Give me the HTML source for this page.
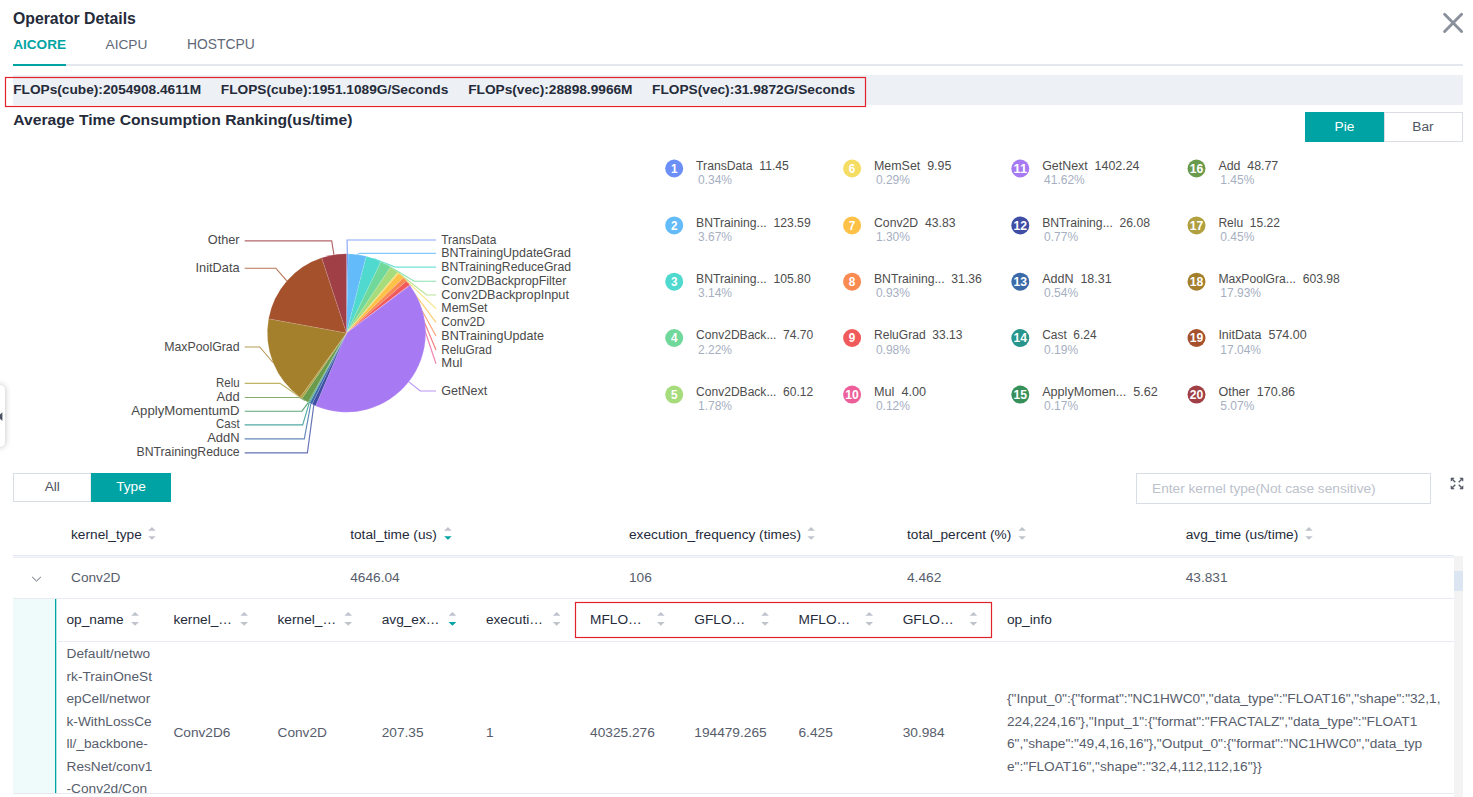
<!DOCTYPE html>
<html><head><meta charset="utf-8"><title>Operator Details</title>
<style>
html,body{margin:0;padding:0;background:#fff;overflow:hidden;}
body{width:1473px;height:797px;}
svg{display:block;font-family:"Liberation Sans",sans-serif;}
</style></head><body>
<svg width="1473" height="797" viewBox="0 0 1473 797">
<text x="13" y="23.9" font-size="15.8" fill="#252b3a" font-weight="bold">Operator Details</text>
<text x="13.2" y="48.9" font-size="13.6" fill="#00a3a3" font-weight="bold">AICORE</text>
<text x="105.5" y="48.9" font-size="13.7" fill="#5f6878">AICPU</text>
<text x="187" y="48.9" font-size="13.85" fill="#5f6878">HOSTCPU</text>
<rect x="13" y="64" width="1450" height="2" fill="#e4e7ee"/>
<rect x="13" y="64" width="53" height="2" fill="#00a3a3"/>
<path d="M1444.6,14.2 L1461.6,31.4 M1461.6,14.2 L1444.6,31.4" stroke="#8b919c" stroke-width="2.9" stroke-linecap="round"/>
<rect x="13" y="75" width="1450" height="30" fill="#edf0f4"/>
<rect x="5.5" y="77.5" width="860" height="29" fill="none" stroke="#e0222c" stroke-width="1.2"/>
<text x="13.2" y="93.6" font-size="13.7" fill="#252b3a" font-weight="bold">FLOPs(cube):2054908.4611M</text>
<text x="220.8" y="93.6" font-size="13.7" fill="#252b3a" font-weight="bold">FLOPS(cube):1951.1089G/Seconds</text>
<text x="468.2" y="93.6" font-size="13.7" fill="#252b3a" font-weight="bold">FLOPs(vec):28898.9966M</text>
<text x="652.1" y="93.6" font-size="13.7" fill="#252b3a" font-weight="bold">FLOPS(vec):31.9872G/Seconds</text>
<text x="13.2" y="125.4" font-size="15.2" fill="#252b3a" font-weight="bold" textLength="339.30" lengthAdjust="spacingAndGlyphs">Average Time Consumption Ranking(us/time)</text>
<rect x="1305" y="112" width="79" height="30" fill="#00a3a3"/>
<rect x="1384.5" y="112.5" width="78" height="29" fill="#fff" stroke="#dadde6" stroke-width="1"/>
<text x="1344.5" y="131" font-size="13.7" fill="#ffffff" text-anchor="middle">Pie</text>
<text x="1423" y="131" font-size="13.7" fill="#4f5562" text-anchor="middle">Bar</text>
<path d="M347.35,253.80 L347.10,240.00 L436.00,240.00" fill="none" stroke="#6b8ff7" stroke-width="1.15" stroke-opacity="0.8"/>
<text x="441.3" y="243.5" font-size="12.4" fill="#4a4a4a" textLength="54.96" lengthAdjust="spacingAndGlyphs">TransData</text>
<path d="M357.29,254.54 L359.80,253.30 L436.00,253.30" fill="none" stroke="#64bbf9" stroke-width="1.15" stroke-opacity="0.8"/>
<text x="441.3" y="256.8" font-size="12.4" fill="#4a4a4a" textLength="129.67" lengthAdjust="spacingAndGlyphs">BNTrainingUpdateGrad</text>
<path d="M373.70,258.62 L395.20,267.10 L436.00,267.10" fill="none" stroke="#4fd9cf" stroke-width="1.15" stroke-opacity="0.8"/>
<text x="441.3" y="270.6" font-size="12.4" fill="#4a4a4a" textLength="129.70" lengthAdjust="spacingAndGlyphs">BNTrainingReduceGrad</text>
<path d="M385.78,264.23 L414.30,281.20 L436.00,281.20" fill="none" stroke="#6fd89a" stroke-width="1.15" stroke-opacity="0.8"/>
<text x="441.3" y="284.7" font-size="12.4" fill="#4a4a4a" textLength="125.10" lengthAdjust="spacingAndGlyphs">Conv2DBackpropFilter</text>
<path d="M394.09,269.69 L426.70,295.00 L436.00,295.00" fill="none" stroke="#a6dc7c" stroke-width="1.15" stroke-opacity="0.8"/>
<text x="441.3" y="298.5" font-size="12.4" fill="#4a4a4a" textLength="127.62" lengthAdjust="spacingAndGlyphs">Conv2DBackpropInput</text>
<path d="M398.11,272.92 L436.00,308.70" fill="none" stroke="#f5dc62" stroke-width="1.15" stroke-opacity="0.8"/>
<text x="441.3" y="312.2" font-size="12.4" fill="#4a4a4a" textLength="46.18" lengthAdjust="spacingAndGlyphs">MemSet</text>
<path d="M401.04,275.57 L436.00,322.40" fill="none" stroke="#fdc147" stroke-width="1.15" stroke-opacity="0.8"/>
<text x="441.3" y="325.9" font-size="12.4" fill="#4a4a4a" textLength="43.67" lengthAdjust="spacingAndGlyphs">Conv2D</text>
<path d="M404.93,279.53 L436.00,336.00" fill="none" stroke="#f98b52" stroke-width="1.15" stroke-opacity="0.8"/>
<text x="441.3" y="339.5" font-size="12.4" fill="#4a4a4a" textLength="102.60" lengthAdjust="spacingAndGlyphs">BNTrainingUpdate</text>
<path d="M408.03,283.13 L436.00,350.00" fill="none" stroke="#f05a5a" stroke-width="1.15" stroke-opacity="0.8"/>
<text x="441.3" y="353.5" font-size="12.4" fill="#4a4a4a" textLength="50.40" lengthAdjust="spacingAndGlyphs">ReluGrad</text>
<path d="M409.72,285.29 L436.00,363.70" fill="none" stroke="#ec5f9b" stroke-width="1.15" stroke-opacity="0.8"/>
<text x="441.3" y="367.2" font-size="12.4" fill="#4a4a4a" textLength="21.02" lengthAdjust="spacingAndGlyphs">Mul</text>
<path d="M408.84,381.86 L420.30,391.00 L436.00,391.00" fill="none" stroke="#a77af3" stroke-width="1.15" stroke-opacity="0.8"/>
<text x="441.3" y="394.5" font-size="12.4" fill="#4a4a4a" textLength="46.07" lengthAdjust="spacingAndGlyphs">GetNext</text>
<path d="M313.79,405.13 L307.40,452.90 L244.70,452.90" fill="none" stroke="#3f4da5" stroke-width="1.15" stroke-opacity="0.8"/>
<text x="239.6" y="456.4" font-size="12.4" fill="#4a4a4a" text-anchor="end" textLength="103.12" lengthAdjust="spacingAndGlyphs">BNTrainingReduce</text>
<path d="M310.85,403.73 L304.30,438.90 L244.70,438.90" fill="none" stroke="#3a6aa8" stroke-width="1.15" stroke-opacity="0.8"/>
<text x="239.6" y="442.4" font-size="12.4" fill="#4a4a4a" text-anchor="end" textLength="32.42" lengthAdjust="spacingAndGlyphs">AddN</text>
<path d="M309.24,402.89 L302.70,424.80 L244.70,424.80" fill="none" stroke="#26958b" stroke-width="1.15" stroke-opacity="0.8"/>
<text x="239.6" y="428.3" font-size="12.4" fill="#4a4a4a" text-anchor="end" textLength="23.51" lengthAdjust="spacingAndGlyphs">Cast</text>
<path d="M308.45,402.46 L301.90,411.20 L244.70,411.20" fill="none" stroke="#37905a" stroke-width="1.15" stroke-opacity="0.8"/>
<text x="239.6" y="414.7" font-size="12.4" fill="#4a4a4a" text-anchor="end" textLength="108.30" lengthAdjust="spacingAndGlyphs">ApplyMomentumD</text>
<path d="M304.97,400.44 L299.60,397.50 L244.70,397.50" fill="none" stroke="#6a9a4b" stroke-width="1.15" stroke-opacity="0.8"/>
<text x="239.6" y="401.0" font-size="12.4" fill="#4a4a4a" text-anchor="end" textLength="22.99" lengthAdjust="spacingAndGlyphs">Add</text>
<path d="M301.02,397.84 L280.00,383.40 L244.70,383.40" fill="none" stroke="#b0a040" stroke-width="1.15" stroke-opacity="0.8"/>
<text x="239.6" y="386.9" font-size="12.4" fill="#4a4a4a" text-anchor="end" textLength="23.52" lengthAdjust="spacingAndGlyphs">Relu</text>
<path d="M273.00,362.50 L259.70,347.00 L244.70,347.00" fill="none" stroke="#a5802c" stroke-width="1.15" stroke-opacity="0.8"/>
<text x="239.6" y="350.5" font-size="12.4" fill="#4a4a4a" text-anchor="end" textLength="75.39" lengthAdjust="spacingAndGlyphs">MaxPoolGrad</text>
<path d="M286.80,280.96 L275.80,268.20 L244.70,268.20" fill="none" stroke="#a5512c" stroke-width="1.15" stroke-opacity="0.8"/>
<text x="239.6" y="271.7" font-size="12.4" fill="#4a4a4a" text-anchor="end" textLength="44.05" lengthAdjust="spacingAndGlyphs">InitData</text>
<path d="M333.94,254.80 L331.70,240.80 L244.70,240.80" fill="none" stroke="#a03f45" stroke-width="1.15" stroke-opacity="0.8"/>
<text x="239.6" y="244.3" font-size="12.4" fill="#4a4a4a" text-anchor="end" textLength="31.81" lengthAdjust="spacingAndGlyphs">Other</text>
<path d="M346.5,333.0 L346.50,253.80 A79.2,79.2 0 0 1 348.19,253.82 Z" fill="#6b8ff7" stroke="#ffffff" stroke-width="0.35" stroke-opacity="0.35"/>
<path d="M346.5,333.0 L348.19,253.82 A79.2,79.2 0 0 1 366.24,256.30 Z" fill="#64bbf9" stroke="#ffffff" stroke-width="0.35" stroke-opacity="0.35"/>
<path d="M346.5,333.0 L366.24,256.30 A79.2,79.2 0 0 1 380.90,261.66 Z" fill="#4fd9cf" stroke="#ffffff" stroke-width="0.35" stroke-opacity="0.35"/>
<path d="M346.5,333.0 L380.90,261.66 A79.2,79.2 0 0 1 390.48,267.13 Z" fill="#6fd89a" stroke="#ffffff" stroke-width="0.35" stroke-opacity="0.35"/>
<path d="M346.5,333.0 L390.48,267.13 A79.2,79.2 0 0 1 397.56,272.45 Z" fill="#a6dc7c" stroke="#ffffff" stroke-width="0.35" stroke-opacity="0.35"/>
<path d="M346.5,333.0 L397.56,272.45 A79.2,79.2 0 0 1 398.65,273.39 Z" fill="#f5dc62" stroke="#ffffff" stroke-width="0.35" stroke-opacity="0.35"/>
<path d="M346.5,333.0 L398.65,273.39 A79.2,79.2 0 0 1 403.34,277.85 Z" fill="#fdc147" stroke="#ffffff" stroke-width="0.35" stroke-opacity="0.35"/>
<path d="M346.5,333.0 L403.34,277.85 A79.2,79.2 0 0 1 406.46,281.26 Z" fill="#f98b52" stroke="#ffffff" stroke-width="0.35" stroke-opacity="0.35"/>
<path d="M346.5,333.0 L406.46,281.26 A79.2,79.2 0 0 1 409.53,285.05 Z" fill="#f05a5a" stroke="#ffffff" stroke-width="0.35" stroke-opacity="0.35"/>
<path d="M346.5,333.0 L409.53,285.05 A79.2,79.2 0 0 1 409.89,285.53 Z" fill="#ec5f9b" stroke="#ffffff" stroke-width="0.35" stroke-opacity="0.35"/>
<path d="M346.5,333.0 L409.89,285.53 A79.2,79.2 0 0 1 315.55,405.90 Z" fill="#a77af3" stroke="#ffffff" stroke-width="0.35" stroke-opacity="0.35"/>
<path d="M346.5,333.0 L315.55,405.90 A79.2,79.2 0 0 1 312.06,404.32 Z" fill="#3f4da5" stroke="#ffffff" stroke-width="0.35" stroke-opacity="0.35"/>
<path d="M346.5,333.0 L312.06,404.32 A79.2,79.2 0 0 1 309.66,403.11 Z" fill="#3a6aa8" stroke="#ffffff" stroke-width="0.35" stroke-opacity="0.35"/>
<path d="M346.5,333.0 L309.66,403.11 A79.2,79.2 0 0 1 308.83,402.67 Z" fill="#26958b" stroke="#ffffff" stroke-width="0.35" stroke-opacity="0.35"/>
<path d="M346.5,333.0 L308.83,402.67 A79.2,79.2 0 0 1 308.08,402.26 Z" fill="#37905a" stroke="#ffffff" stroke-width="0.35" stroke-opacity="0.35"/>
<path d="M346.5,333.0 L308.08,402.26 A79.2,79.2 0 0 1 301.94,398.48 Z" fill="#6a9a4b" stroke="#ffffff" stroke-width="0.35" stroke-opacity="0.35"/>
<path d="M346.5,333.0 L301.94,398.48 A79.2,79.2 0 0 1 300.11,397.19 Z" fill="#b0a040" stroke="#ffffff" stroke-width="0.35" stroke-opacity="0.35"/>
<path d="M346.5,333.0 L300.11,397.19 A79.2,79.2 0 0 1 268.60,318.70 Z" fill="#a5802c" stroke="#ffffff" stroke-width="0.35" stroke-opacity="0.35"/>
<path d="M346.5,333.0 L268.60,318.70 A79.2,79.2 0 0 1 321.69,257.78 Z" fill="#a5512c" stroke="#ffffff" stroke-width="0.35" stroke-opacity="0.35"/>
<path d="M346.5,333.0 L321.69,257.78 A79.2,79.2 0 0 1 346.50,253.80 Z" fill="#a03f45" stroke="#ffffff" stroke-width="0.35" stroke-opacity="0.35"/>
<circle cx="674.2" cy="168.5" r="9" fill="#6b8ff7"/>
<text x="674.2" y="172.8" font-size="12" fill="#ffffff" font-weight="bold" text-anchor="middle" textLength="6.51" lengthAdjust="spacingAndGlyphs">1</text>
<text x="696.1" y="169.7" font-size="12" fill="#4d4d4d" xml:space="preserve" textLength="92.80" lengthAdjust="spacingAndGlyphs">TransData  11.45</text>
<text x="698.0" y="184.0" font-size="12" fill="#a6afc2">0.34%</text>
<circle cx="674.2" cy="225.4" r="9" fill="#64bbf9"/>
<text x="674.2" y="229.70000000000002" font-size="12" fill="#ffffff" font-weight="bold" text-anchor="middle" textLength="6.51" lengthAdjust="spacingAndGlyphs">2</text>
<text x="696.1" y="226.6" font-size="12" fill="#4d4d4d" xml:space="preserve" textLength="114.57" lengthAdjust="spacingAndGlyphs">BNTraining...  123.59</text>
<text x="698.0" y="240.9" font-size="12" fill="#a6afc2">3.67%</text>
<circle cx="674.2" cy="281.7" r="9" fill="#4fd9cf"/>
<text x="674.2" y="286.0" font-size="12" fill="#ffffff" font-weight="bold" text-anchor="middle" textLength="6.51" lengthAdjust="spacingAndGlyphs">3</text>
<text x="696.1" y="282.9" font-size="12" fill="#4d4d4d" xml:space="preserve" textLength="114.57" lengthAdjust="spacingAndGlyphs">BNTraining...  105.80</text>
<text x="698.0" y="297.2" font-size="12" fill="#a6afc2">3.14%</text>
<circle cx="674.2" cy="338.0" r="9" fill="#6fd89a"/>
<text x="674.2" y="342.3" font-size="12" fill="#ffffff" font-weight="bold" text-anchor="middle" textLength="6.51" lengthAdjust="spacingAndGlyphs">4</text>
<text x="696.1" y="339.2" font-size="12" fill="#4d4d4d" xml:space="preserve" textLength="117.17" lengthAdjust="spacingAndGlyphs">Conv2DBack...  74.70</text>
<text x="698.0" y="353.5" font-size="12" fill="#a6afc2">2.22%</text>
<circle cx="674.2" cy="394.6" r="9" fill="#a6dc7c"/>
<text x="674.2" y="398.90000000000003" font-size="12" fill="#ffffff" font-weight="bold" text-anchor="middle" textLength="6.51" lengthAdjust="spacingAndGlyphs">5</text>
<text x="696.1" y="395.8" font-size="12" fill="#4d4d4d" xml:space="preserve" textLength="117.17" lengthAdjust="spacingAndGlyphs">Conv2DBack...  60.12</text>
<text x="698.0" y="410.1" font-size="12" fill="#a6afc2">1.78%</text>
<circle cx="852.1" cy="168.5" r="9" fill="#f5dc62"/>
<text x="852.1" y="172.8" font-size="12" fill="#ffffff" font-weight="bold" text-anchor="middle" textLength="6.51" lengthAdjust="spacingAndGlyphs">6</text>
<text x="874.0" y="169.7" font-size="12" fill="#4d4d4d" xml:space="preserve" textLength="77.30" lengthAdjust="spacingAndGlyphs">MemSet  9.95</text>
<text x="875.9" y="184.0" font-size="12" fill="#a6afc2">0.29%</text>
<circle cx="852.1" cy="225.4" r="9" fill="#fdc147"/>
<text x="852.1" y="229.70000000000002" font-size="12" fill="#ffffff" font-weight="bold" text-anchor="middle" textLength="6.51" lengthAdjust="spacingAndGlyphs">7</text>
<text x="874.0" y="226.6" font-size="12" fill="#4d4d4d" xml:space="preserve" textLength="81.61" lengthAdjust="spacingAndGlyphs">Conv2D  43.83</text>
<text x="875.9" y="240.9" font-size="12" fill="#a6afc2">1.30%</text>
<circle cx="852.1" cy="281.7" r="9" fill="#f98b52"/>
<text x="852.1" y="286.0" font-size="12" fill="#ffffff" font-weight="bold" text-anchor="middle" textLength="6.51" lengthAdjust="spacingAndGlyphs">8</text>
<text x="874.0" y="282.9" font-size="12" fill="#4d4d4d" xml:space="preserve" textLength="107.82" lengthAdjust="spacingAndGlyphs">BNTraining...  31.36</text>
<text x="875.9" y="297.2" font-size="12" fill="#a6afc2">0.93%</text>
<circle cx="852.1" cy="338.0" r="9" fill="#f05a5a"/>
<text x="852.1" y="342.3" font-size="12" fill="#ffffff" font-weight="bold" text-anchor="middle" textLength="6.51" lengthAdjust="spacingAndGlyphs">9</text>
<text x="874.0" y="339.2" font-size="12" fill="#4d4d4d" xml:space="preserve" textLength="88.48" lengthAdjust="spacingAndGlyphs">ReluGrad  33.13</text>
<text x="875.9" y="353.5" font-size="12" fill="#a6afc2">0.98%</text>
<circle cx="852.1" cy="394.6" r="9" fill="#ec5f9b"/>
<text x="852.1" y="398.90000000000003" font-size="12" fill="#ffffff" font-weight="bold" text-anchor="middle" textLength="13.53" lengthAdjust="spacingAndGlyphs">10</text>
<text x="874.0" y="395.8" font-size="12" fill="#4d4d4d" xml:space="preserve" textLength="52.08" lengthAdjust="spacingAndGlyphs">Mul  4.00</text>
<text x="875.9" y="410.1" font-size="12" fill="#a6afc2">0.12%</text>
<circle cx="1020.3" cy="168.5" r="9" fill="#a77af3"/>
<text x="1020.3" y="172.8" font-size="12" fill="#ffffff" font-weight="bold" text-anchor="middle" textLength="13.53" lengthAdjust="spacingAndGlyphs">11</text>
<text x="1042.2" y="169.7" font-size="12" fill="#4d4d4d" xml:space="preserve" textLength="97.28" lengthAdjust="spacingAndGlyphs">GetNext  1402.24</text>
<text x="1044.1" y="184.0" font-size="12" fill="#a6afc2">41.62%</text>
<circle cx="1020.3" cy="225.4" r="9" fill="#3f4da5"/>
<text x="1020.3" y="229.70000000000002" font-size="12" fill="#ffffff" font-weight="bold" text-anchor="middle" textLength="13.53" lengthAdjust="spacingAndGlyphs">12</text>
<text x="1042.2" y="226.6" font-size="12" fill="#4d4d4d" xml:space="preserve" textLength="107.82" lengthAdjust="spacingAndGlyphs">BNTraining...  26.08</text>
<text x="1044.1" y="240.9" font-size="12" fill="#a6afc2">0.77%</text>
<circle cx="1020.3" cy="281.7" r="9" fill="#3a6aa8"/>
<text x="1020.3" y="286.0" font-size="12" fill="#ffffff" font-weight="bold" text-anchor="middle" textLength="13.53" lengthAdjust="spacingAndGlyphs">13</text>
<text x="1042.2" y="282.9" font-size="12" fill="#4d4d4d" xml:space="preserve" textLength="69.50" lengthAdjust="spacingAndGlyphs">AddN  18.31</text>
<text x="1044.1" y="297.2" font-size="12" fill="#a6afc2">0.54%</text>
<circle cx="1020.3" cy="338.0" r="9" fill="#26958b"/>
<text x="1020.3" y="342.3" font-size="12" fill="#ffffff" font-weight="bold" text-anchor="middle" textLength="13.53" lengthAdjust="spacingAndGlyphs">14</text>
<text x="1042.2" y="339.2" font-size="12" fill="#4d4d4d" xml:space="preserve" textLength="54.38" lengthAdjust="spacingAndGlyphs">Cast  6.24</text>
<text x="1044.1" y="353.5" font-size="12" fill="#a6afc2">0.19%</text>
<circle cx="1020.3" cy="394.6" r="9" fill="#37905a"/>
<text x="1020.3" y="398.90000000000003" font-size="12" fill="#ffffff" font-weight="bold" text-anchor="middle" textLength="13.53" lengthAdjust="spacingAndGlyphs">15</text>
<text x="1042.2" y="395.8" font-size="12" fill="#4d4d4d" xml:space="preserve" textLength="115.62" lengthAdjust="spacingAndGlyphs">ApplyMomen...  5.62</text>
<text x="1044.1" y="410.1" font-size="12" fill="#a6afc2">0.17%</text>
<circle cx="1196.5" cy="168.5" r="9" fill="#6a9a4b"/>
<text x="1196.5" y="172.8" font-size="12" fill="#ffffff" font-weight="bold" text-anchor="middle" textLength="13.53" lengthAdjust="spacingAndGlyphs">16</text>
<text x="1218.4" y="169.7" font-size="12" fill="#4d4d4d" xml:space="preserve" textLength="59.87" lengthAdjust="spacingAndGlyphs">Add  48.77</text>
<text x="1220.3" y="184.0" font-size="12" fill="#a6afc2">1.45%</text>
<circle cx="1196.5" cy="225.4" r="9" fill="#b0a040"/>
<text x="1196.5" y="229.70000000000002" font-size="12" fill="#ffffff" font-weight="bold" text-anchor="middle" textLength="13.53" lengthAdjust="spacingAndGlyphs">17</text>
<text x="1218.4" y="226.6" font-size="12" fill="#4d4d4d" xml:space="preserve" textLength="61.60" lengthAdjust="spacingAndGlyphs">Relu  15.22</text>
<text x="1220.3" y="240.9" font-size="12" fill="#a6afc2">0.45%</text>
<circle cx="1196.5" cy="281.7" r="9" fill="#a5802c"/>
<text x="1196.5" y="286.0" font-size="12" fill="#ffffff" font-weight="bold" text-anchor="middle" textLength="13.53" lengthAdjust="spacingAndGlyphs">18</text>
<text x="1218.4" y="282.9" font-size="12" fill="#4d4d4d" xml:space="preserve" textLength="121.41" lengthAdjust="spacingAndGlyphs">MaxPoolGra...  603.98</text>
<text x="1220.3" y="297.2" font-size="12" fill="#a6afc2">17.93%</text>
<circle cx="1196.5" cy="338.0" r="9" fill="#a5512c"/>
<text x="1196.5" y="342.3" font-size="12" fill="#ffffff" font-weight="bold" text-anchor="middle" textLength="13.53" lengthAdjust="spacingAndGlyphs">19</text>
<text x="1218.4" y="339.2" font-size="12" fill="#4d4d4d" xml:space="preserve" textLength="88.31" lengthAdjust="spacingAndGlyphs">InitData  574.00</text>
<text x="1220.3" y="353.5" font-size="12" fill="#a6afc2">17.04%</text>
<circle cx="1196.5" cy="394.6" r="9" fill="#a03f45"/>
<text x="1196.5" y="398.90000000000003" font-size="12" fill="#ffffff" font-weight="bold" text-anchor="middle" textLength="13.53" lengthAdjust="spacingAndGlyphs">20</text>
<text x="1218.4" y="395.8" font-size="12" fill="#4d4d4d" xml:space="preserve" textLength="76.70" lengthAdjust="spacingAndGlyphs">Other  170.86</text>
<text x="1220.3" y="410.1" font-size="12" fill="#a6afc2">5.07%</text>
<defs><filter id="sh" x="-200%" y="-50%" width="500%" height="200%"><feGaussianBlur stdDeviation="3"/></filter></defs>
<rect x="-10" y="385" width="15" height="62" rx="5" fill="#000" opacity="0.25" filter="url(#sh)"/>
<rect x="-10" y="385" width="15" height="62" rx="5" fill="#fff"/>
<path d="M0,414.5 L2.4,412.3 L2.4,421 L0,418.8 Z" fill="#4a5262"/>
<rect x="13.5" y="473.5" width="77.5" height="28" fill="#fff" stroke="#d9dde5" stroke-width="1"/>
<rect x="91" y="473" width="80" height="29" fill="#00a3a3"/>
<text x="52.3" y="491" font-size="13.7" fill="#4f5562" text-anchor="middle">All</text>
<text x="131" y="491" font-size="13.7" fill="#ffffff" text-anchor="middle">Type</text>
<rect x="1136.5" y="473.5" width="294" height="30" fill="#fff" stroke="#d9dde5" stroke-width="1"/>
<text x="1152" y="493" font-size="13.7" fill="#bcc1cc">Enter kernel type(Not case sensitive)</text>
<g fill="#555b66" stroke="#555b66"><path d="M1451,478 L1454.2,478 L1451,481.2 Z" stroke-width="0.6"/><path d="M1452.5,479.5 L1455.3,482.3" stroke-width="1.3"/><path d="M1463,478 L1459.8,478 L1463,481.2 Z" stroke-width="0.6"/><path d="M1461.5,479.5 L1458.7,482.3" stroke-width="1.3"/><path d="M1451,489 L1454.2,489 L1451,485.8 Z" stroke-width="0.6"/><path d="M1452.5,487.5 L1455.3,484.7" stroke-width="1.3"/><path d="M1463,489 L1459.8,489 L1463,485.8 Z" stroke-width="0.6"/><path d="M1461.5,487.5 L1458.7,484.7" stroke-width="1.3"/></g>
<text x="71" y="538.7" font-size="13.7" fill="#252b3a">kernel_type</text>
<path d="M148.20,530.70 L151.95,527.10 L155.70,530.70 Z" fill="#bfc4cc"/>
<path d="M148.20,536.20 L151.95,539.80 L155.70,536.20 Z" fill="#bfc4cc"/>
<text x="350.2" y="538.7" font-size="13.7" fill="#252b3a">total_time (us)</text>
<path d="M444.20,530.70 L447.95,527.10 L451.70,530.70 Z" fill="#bfc4cc"/>
<path d="M444.20,536.20 L447.95,539.80 L451.70,536.20 Z" fill="#00a3a3"/>
<text x="629" y="538.7" font-size="13.7" fill="#252b3a">execution_frequency (times)</text>
<path d="M807.40,530.70 L811.15,527.10 L814.90,530.70 Z" fill="#bfc4cc"/>
<path d="M807.40,536.20 L811.15,539.80 L814.90,536.20 Z" fill="#bfc4cc"/>
<text x="907" y="538.7" font-size="13.7" fill="#252b3a">total_percent (%)</text>
<path d="M1018.40,530.70 L1022.15,527.10 L1025.90,530.70 Z" fill="#bfc4cc"/>
<path d="M1018.40,536.20 L1022.15,539.80 L1025.90,536.20 Z" fill="#bfc4cc"/>
<text x="1185.7" y="538.7" font-size="13.7" fill="#252b3a">avg_time (us/time)</text>
<path d="M1305.20,530.70 L1308.95,527.10 L1312.70,530.70 Z" fill="#bfc4cc"/>
<path d="M1305.20,536.20 L1308.95,539.80 L1312.70,536.20 Z" fill="#bfc4cc"/>
<rect x="13" y="555" width="1441" height="1" fill="#e6e9f2"/>
<rect x="13" y="556" width="1441" height="1" fill="#f4f7fd"/>
<rect x="13" y="557" width="1441" height="1" fill="#eaedf4"/>
<rect x="1454" y="556" width="9" height="241" fill="#f3f3f3"/>
<rect x="1454" y="571" width="9" height="20" fill="#dce5f2"/>
<path d="M32.2,577 L36.5,581 L40.8,577" fill="none" stroke="#5f6775" stroke-width="1"/>
<text x="71" y="581.5" font-size="13.7" fill="#575d6c">Conv2D</text>
<text x="350.2" y="581.5" font-size="13.7" fill="#575d6c">4646.04</text>
<text x="629" y="581.5" font-size="13.7" fill="#575d6c">106</text>
<text x="907" y="581.5" font-size="13.7" fill="#575d6c">4.462</text>
<text x="1185.7" y="581.5" font-size="13.7" fill="#575d6c">43.831</text>
<rect x="13" y="598" width="1441" height="1" fill="#e8ebf2"/>
<rect x="13" y="599" width="42" height="194" fill="#effbfb"/>
<rect x="55" y="599" width="1.3" height="194" fill="#00a3a3"/>
<text x="66.5" y="623.9" font-size="13.7" fill="#252b3a">op_name</text>
<path d="M131.20,615.80 L135.05,611.90 L138.90,615.80 Z" fill="#bfc4cc"/>
<path d="M131.20,621.90 L135.05,625.80 L138.90,621.90 Z" fill="#bfc4cc"/>
<text x="173.4" y="623.9" font-size="13.7" fill="#252b3a">kernel_…</text>
<path d="M240.30,615.80 L244.15,611.90 L248.00,615.80 Z" fill="#bfc4cc"/>
<path d="M240.30,621.90 L244.15,625.80 L248.00,621.90 Z" fill="#bfc4cc"/>
<text x="277.5" y="623.9" font-size="13.7" fill="#252b3a">kernel_…</text>
<path d="M344.40,615.80 L348.25,611.90 L352.10,615.80 Z" fill="#bfc4cc"/>
<path d="M344.40,621.90 L348.25,625.80 L352.10,621.90 Z" fill="#bfc4cc"/>
<text x="381.7" y="623.9" font-size="13.7" fill="#252b3a">avg_ex…</text>
<path d="M448.60,615.80 L452.45,611.90 L456.30,615.80 Z" fill="#bfc4cc"/>
<path d="M448.60,621.90 L452.45,625.80 L456.30,621.90 Z" fill="#00a3a3"/>
<text x="485.9" y="623.9" font-size="13.7" fill="#252b3a">executi…</text>
<path d="M552.80,615.80 L556.65,611.90 L560.50,615.80 Z" fill="#bfc4cc"/>
<path d="M552.80,621.90 L556.65,625.80 L560.50,621.90 Z" fill="#bfc4cc"/>
<text x="590.1" y="623.9" font-size="13.7" fill="#252b3a">MFLO…</text>
<path d="M657.00,615.80 L660.85,611.90 L664.70,615.80 Z" fill="#bfc4cc"/>
<path d="M657.00,621.90 L660.85,625.80 L664.70,621.90 Z" fill="#bfc4cc"/>
<text x="694.3" y="623.9" font-size="13.7" fill="#252b3a">GFLO…</text>
<path d="M761.20,615.80 L765.05,611.90 L768.90,615.80 Z" fill="#bfc4cc"/>
<path d="M761.20,621.90 L765.05,625.80 L768.90,621.90 Z" fill="#bfc4cc"/>
<text x="798.5" y="623.9" font-size="13.7" fill="#252b3a">MFLO…</text>
<path d="M865.40,615.80 L869.25,611.90 L873.10,615.80 Z" fill="#bfc4cc"/>
<path d="M865.40,621.90 L869.25,625.80 L873.10,621.90 Z" fill="#bfc4cc"/>
<text x="902.7" y="623.9" font-size="13.7" fill="#252b3a">GFLO…</text>
<path d="M969.60,615.80 L973.45,611.90 L977.30,615.80 Z" fill="#bfc4cc"/>
<path d="M969.60,621.90 L973.45,625.80 L977.30,621.90 Z" fill="#bfc4cc"/>
<text x="1006.9" y="623.9" font-size="13.7" fill="#252b3a">op_info</text>
<rect x="56" y="641" width="1398" height="1" fill="#e8ebf2"/>
<rect x="575.5" y="602.5" width="416" height="35" fill="none" stroke="#e0222c" stroke-width="1.2"/>
<clipPath id="clip1"><rect x="56" y="642" width="1398" height="151"/></clipPath>
<g clip-path="url(#clip1)">
<text x="66.5" y="658.2" font-size="13.7" fill="#575d6c">Default/netwo</text>
<text x="66.5" y="680.7" font-size="13.7" fill="#575d6c">rk-TrainOneSt</text>
<text x="66.5" y="703.2" font-size="13.7" fill="#575d6c">epCell/networ</text>
<text x="66.5" y="725.7" font-size="13.7" fill="#575d6c">k-WithLossCe</text>
<text x="66.5" y="748.2" font-size="13.7" fill="#575d6c">ll/_backbone-</text>
<text x="66.5" y="770.7" font-size="13.7" fill="#575d6c">ResNet/conv1</text>
<text x="66.5" y="793.2" font-size="13.7" fill="#575d6c">-Conv2d/Con</text>
<text x="173.4" y="737.2" font-size="13.7" fill="#575d6c">Conv2D6</text>
<text x="277.5" y="737.2" font-size="13.7" fill="#575d6c">Conv2D</text>
<text x="381.7" y="737.2" font-size="13.7" fill="#575d6c">207.35</text>
<text x="485.9" y="737.2" font-size="13.7" fill="#575d6c">1</text>
<text x="590.1" y="737.2" font-size="13.7" fill="#575d6c">40325.276</text>
<text x="694.3" y="737.2" font-size="13.7" fill="#575d6c">194479.265</text>
<text x="798.5" y="737.2" font-size="13.7" fill="#575d6c">6.425</text>
<text x="902.7" y="737.2" font-size="13.7" fill="#575d6c">30.984</text>
<text x="1007" y="703.4" font-size="13.7" fill="#575d6c">{"Input_0":{"format":"NC1HWC0","data_type":"FLOAT16","shape":"32,1,</text>
<text x="1007" y="725.9" font-size="13.7" fill="#575d6c">224,224,16"},"Input_1":{"format":"FRACTALZ","data_type":"FLOAT1</text>
<text x="1007" y="748.4" font-size="13.7" fill="#575d6c">6","shape":"49,4,16,16"},"Output_0":{"format":"NC1HWC0","data_typ</text>
<text x="1007" y="770.9" font-size="13.7" fill="#575d6c">e":"FLOAT16","shape":"32,4,112,112,16"}}</text>
</g>
<rect x="13" y="793" width="1441" height="1" fill="#e6e9f0"/>
</svg>
</body></html>
